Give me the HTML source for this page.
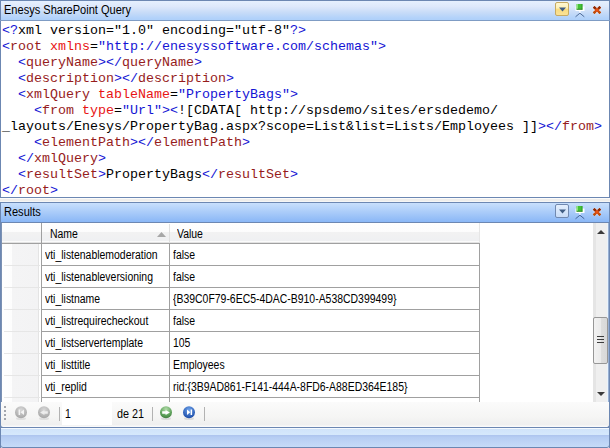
<!DOCTYPE html>
<html><head><meta charset="utf-8">
<style>
*{box-sizing:border-box}
html,body{margin:0;padding:0}
body{width:610px;height:448px;position:relative;overflow:hidden;background:#fff;font-family:"Liberation Sans",sans-serif}
.abs{position:absolute}
.ttl{position:absolute;font-size:12px;color:#000;white-space:nowrap;line-height:14px;transform-origin:0 0;transform:scaleX(0.92)}
.code{position:absolute;left:2px;top:23px;font-family:"Liberation Mono",monospace;font-size:13.333px;line-height:16px;white-space:pre;color:#000}
.b{color:#1414d4}
.e{color:#961c1c}
.a{color:#e81414}
.g{position:absolute;font-size:12px;line-height:14px;white-space:nowrap;color:#000;transform-origin:0 0;transform:scaleX(0.87)}
.hl{position:absolute;left:42px;width:438px;height:1px;background:#a0a0a0}
.il{position:absolute;left:4px;width:36px;height:1px;background:#e6e6e6}
</style></head><body>

<!-- ============ top panel ============ -->
<div class="abs" style="left:0;top:0;width:610px;height:198px;border:1px solid #6c87b2;background:#fff"></div>
<div class="abs" style="left:1px;top:1px;width:608px;height:19px;background:linear-gradient(#e6f0fe 0%,#dde8fb 30%,#c8dcf8 60%,#b2d2fa 90%,#aed0fa 100%)"></div>
<div class="abs" style="left:0;top:20px;width:610px;height:1px;background:#7f9cc4"></div>
<div class="ttl" style="left:4px;top:3px">Enesys SharePoint Query</div>

<!-- top icons -->
<div class="abs" style="left:555px;top:2px;width:14px;height:14px;border:1px solid #c6aa62;border-radius:2px;background:linear-gradient(#fef7d2 0%,#fdf0b8 42%,#f9dc80 52%,#fae298 100%)"></div>
<svg class="abs" style="left:559px;top:7px" width="7" height="5"><path d="M0 0.5 H7 L3.5 4.5 Z" fill="#405d84"/></svg>
<svg class="abs" style="left:573px;top:2px" width="13" height="16">
  <rect x="2.5" y="4.5" width="9" height="4.5" fill="#ffffff"/>
  <rect x="3.6" y="2" width="5.8" height="5.6" fill="#44c236"/>
  <rect x="3.6" y="2" width="1.4" height="5.6" fill="#8ee27e"/>
  <rect x="8.5" y="2" width="0.9" height="5.6" fill="#2f9a28"/>
  <rect x="3.6" y="6.8" width="5.8" height="0.8" fill="#2a7a24"/>
  <rect x="6.2" y="9" width="1.4" height="2" fill="#ffffff" opacity="0.85"/>
  <path d="M2.5 14.8 L6.9 11.2 L11.3 14.8" stroke="#4f6d9c" stroke-width="1" fill="none"/>
</svg>
<svg class="abs" style="left:591px;top:4px" width="12" height="12">
  <path d="M2.7 2.8 L9.3 9.2 M9.3 2.8 L2.7 9.2" stroke="#ffffff" stroke-width="3.8" opacity="0.45"/>
  <path d="M2.7 2.8 L9.3 9.2 M9.3 2.8 L2.7 9.2" stroke="#d8480f" stroke-width="2.3"/>
  <path d="M2.7 2.8 L4.7 4.7 M9.3 2.8 L7.3 4.7" stroke="#8a2a08" stroke-width="2.3"/>
  <path d="M2.7 9.2 L4.3 7.6 M9.3 9.2 L7.7 7.6" stroke="#b8500f" stroke-width="2.3"/>
  <rect x="5.2" y="5.2" width="1.6" height="1.6" fill="#ef5a14"/>
</svg>

<div class="code"><span class="b">&lt;?</span>xml version="1.0" encoding="utf-8"<span class="b">?&gt;</span>
<span class="b">&lt;</span><span class="e">root</span><span class="a"> xmlns</span>=<span class="b">"http://enesyssoftware.com/schemas"&gt;</span>
  <span class="b">&lt;</span><span class="e">queryName</span><span class="b">&gt;&lt;/</span><span class="e">queryName</span><span class="b">&gt;</span>
  <span class="b">&lt;</span><span class="e">description</span><span class="b">&gt;&lt;/</span><span class="e">description</span><span class="b">&gt;</span>
  <span class="b">&lt;</span><span class="e">xmlQuery</span><span class="a"> tableName</span>=<span class="b">"PropertyBags"&gt;</span>
    <span class="b">&lt;</span><span class="e">from</span><span class="a"> type</span>=<span class="b">"Url"&gt;&lt;</span>![CDATA[ http://spsdemo/sites/ersdedemo/
_layouts/Enesys/PropertyBag.aspx?scope=List&amp;list=Lists/Employees ]]<span class="b">&gt;&lt;/</span><span class="e">from</span><span class="b">&gt;</span>
    <span class="b">&lt;</span><span class="e">elementPath</span><span class="b">&gt;&lt;/</span><span class="e">elementPath</span><span class="b">&gt;</span>
  <span class="b">&lt;/</span><span class="e">xmlQuery</span><span class="b">&gt;</span>
  <span class="b">&lt;</span><span class="e">resultSet</span><span class="b">&gt;</span>PropertyBags<span class="b">&lt;/</span><span class="e">resultSet</span><span class="b">&gt;</span>
<span class="b">&lt;/</span><span class="e">root</span><span class="b">&gt;</span></div>

<!-- ============ gap ============ -->
<div class="abs" style="left:0;top:198px;width:610px;height:4px;background:linear-gradient(#fbfbfb 0,#fbfbfb 1px,#efeeec 1px,#efeeec 3px,#f6f6f5 3px)"></div>

<!-- ============ results panel ============ -->
<div class="abs" style="left:0;top:202px;width:610px;height:246px;background:#fff;border-left:1px solid #6c87b2;border-right:1px solid #6c87b2;border-top:1px solid #6c87b2"></div>
<div class="abs" style="left:1px;top:203px;width:608px;height:19px;background:linear-gradient(#c8dffc 0%,#a9cbf9 50%,#8ab7f6 100%)"></div>
<div class="abs" style="left:0;top:222px;width:610px;height:1px;background:#6c87b2"></div>
<div class="ttl" style="left:4px;top:205px">Results</div>

<!-- results icons -->
<div class="abs" style="left:555px;top:204px;width:14px;height:14px;border:1px solid #7189b0;border-radius:2px;background:linear-gradient(#e4effd,#c8dcf7)"></div>
<svg class="abs" style="left:559px;top:209px" width="7" height="5"><path d="M0 0.5 H7 L3.5 4.5 Z" fill="#405d84"/></svg>
<svg class="abs" style="left:573px;top:204px" width="13" height="16">
  <rect x="2.5" y="4.5" width="9" height="4.5" fill="#ffffff"/>
  <rect x="3.6" y="2" width="5.8" height="5.6" fill="#44c236"/>
  <rect x="3.6" y="2" width="1.4" height="5.6" fill="#8ee27e"/>
  <rect x="8.5" y="2" width="0.9" height="5.6" fill="#2f9a28"/>
  <rect x="3.6" y="6.8" width="5.8" height="0.8" fill="#2a7a24"/>
  <rect x="6.2" y="9" width="1.4" height="2" fill="#ffffff" opacity="0.85"/>
  <path d="M2.5 14.8 L6.9 11.2 L11.3 14.8" stroke="#45639a" stroke-width="1" fill="none"/>
</svg>
<svg class="abs" style="left:591px;top:206px" width="12" height="12">
  <path d="M2.7 2.8 L9.3 9.2 M9.3 2.8 L2.7 9.2" stroke="#ffffff" stroke-width="3.8" opacity="0.45"/>
  <path d="M2.7 2.8 L9.3 9.2 M9.3 2.8 L2.7 9.2" stroke="#d8480f" stroke-width="2.3"/>
  <path d="M2.7 2.8 L4.7 4.7 M9.3 2.8 L7.3 4.7" stroke="#8a2a08" stroke-width="2.3"/>
  <path d="M2.7 9.2 L4.3 7.6 M9.3 9.2 L7.7 7.6" stroke="#b8500f" stroke-width="2.3"/>
  <rect x="5.2" y="5.2" width="1.6" height="1.6" fill="#ef5a14"/>
</svg>

<!-- ============ grid ============ -->
<!-- indicator column background -->
<div class="abs" style="left:1px;top:223px;width:40px;height:179px;background:linear-gradient(90deg,#ffffff 0,#fdfdfd 11px,#f4f4f5 11px,#f3f3f4 37px,#e4e4e4 37px,#e4e4e4 38px,#ffffff 38px)"></div>
<!-- header -->
<div class="abs" style="left:42px;top:223px;width:437px;height:20px;background:linear-gradient(#fefefe 0,#fcfcfc 9px,#f2f2f2 9px,#eff0f2 18px,#fbfbfb 18px,#fbfbfb 19px,#e2e2e2 19px)"></div>
<div class="abs" style="left:1px;top:223px;width:40px;height:20px;background:linear-gradient(#fefefe 0,#fcfcfc 9px,#f2f2f2 9px,#eff0f2 18px,#fbfbfb 18px,#fbfbfb 19px,#e2e2e2 19px)"></div>
<div class="abs" style="left:1px;top:243px;width:479px;height:1px;background:#a0a0a0"></div>
<div class="abs" style="left:41px;top:223px;width:1px;height:179px;background:#a0a0a0"></div>
<div class="abs" style="left:169px;top:243px;width:1px;height:159px;background:#a0a0a0"></div>
<div class="abs" style="left:169px;top:224px;width:1px;height:18px;background:#e0e0e0"></div>
<div class="abs" style="left:479px;top:243px;width:1px;height:159px;background:#a0a0a0"></div>
<div class="abs" style="left:479px;top:223px;width:1px;height:20px;background:#e6e6e6"></div>

<div class="g" style="left:50px;top:227px">Name</div>
<svg class="abs" style="left:157px;top:232px" width="9" height="5"><path d="M0 5 L4.5 0 L9 5 Z" fill="#a7a7a7"/></svg>
<div class="g" style="left:177px;top:227px">Value</div>

<div class="hl" style="top:265px"></div><div class="il" style="top:265px"></div>
<div class="hl" style="top:287px"></div><div class="il" style="top:287px"></div>
<div class="hl" style="top:309px"></div><div class="il" style="top:309px"></div>
<div class="hl" style="top:331px"></div><div class="il" style="top:331px"></div>
<div class="hl" style="top:353px"></div><div class="il" style="top:353px"></div>
<div class="hl" style="top:375px"></div><div class="il" style="top:375px"></div>
<div class="hl" style="top:397px"></div><div class="il" style="top:397px"></div>

<div class="g" style="left:45px;top:248px">vti_listenablemoderation</div><div class="g" style="left:172.5px;top:248px">false</div>
<div class="g" style="left:45px;top:270px">vti_listenableversioning</div><div class="g" style="left:172.5px;top:270px">false</div>
<div class="g" style="left:45px;top:292px">vti_listname</div><div class="g" style="left:172.5px;top:292px">{B39C0F79-6EC5-4DAC-B910-A538CD399499}</div>
<div class="g" style="left:45px;top:314px">vti_listrequirecheckout</div><div class="g" style="left:172.5px;top:314px">false</div>
<div class="g" style="left:45px;top:336px">vti_listservertemplate</div><div class="g" style="left:172.5px;top:336px">105</div>
<div class="g" style="left:45px;top:358px">vti_listtitle</div><div class="g" style="left:172.5px;top:358px">Employees</div>
<div class="g" style="left:45px;top:380px">vti_replid</div><div class="g" style="left:172.5px;top:380px">rid:{3B9AD861-F141-444A-8FD6-A88ED364E185}</div>

<!-- ============ scrollbar ============ -->
<div class="abs" style="left:593px;top:223px;width:15px;height:179px;background:linear-gradient(90deg,#e5e5e5 0,#e5e5e5 3px,#efefef 3px,#efefef 14px,#e9f3fc 14px)"></div>
<svg class="abs" style="left:597px;top:229px" width="8" height="6"><path d="M0 5 L4 1 L8 5 Z" fill="#3a3a3a"/></svg>
<svg class="abs" style="left:597px;top:391px" width="8" height="6"><path d="M0 1 L4 5 L8 1 Z" fill="#3a3a3a"/></svg>
<div class="abs" style="left:593px;top:317px;width:15px;height:47px;border:1px solid #979797;border-radius:2px;background:linear-gradient(90deg,#f2f2f2 0,#ebebeb 50%,#dedede 51%,#d8d8d8 100%)"></div>
<div class="abs" style="left:597px;top:336px;width:7px;height:1px;background:#3c3c3c"></div>
<div class="abs" style="left:597px;top:339px;width:7px;height:1px;background:#3c3c3c"></div>
<div class="abs" style="left:597px;top:342px;width:7px;height:1px;background:#3c3c3c"></div>

<!-- ============ navigator ============ -->
<div class="abs" style="left:0;top:402px;width:610px;height:26px;border:1px solid #6c87b2;border-top:none;border-radius:0 0 3px 3px;background:linear-gradient(#fbfbfb,#f5f5f4 60%,#efefef 92%,#fafafa 96%)"></div>
<div class="abs" style="left:62px;top:402px;width:50px;height:23px;background:#ffffff"></div>
<div class="abs" style="left:4px;top:406px;width:2px;height:2px;background:#a3a6ad"></div>
<div class="abs" style="left:4px;top:410px;width:2px;height:2px;background:#a3a6ad"></div>
<div class="abs" style="left:4px;top:414px;width:2px;height:2px;background:#a3a6ad"></div>
<div class="abs" style="left:4px;top:418px;width:2px;height:2px;background:#a3a6ad"></div>

<svg class="abs" style="left:13px;top:404px" width="200" height="18">
  <defs>
    <radialGradient id="gg" cx="50%" cy="30%" r="70%"><stop offset="0" stop-color="#d8d8d8"/><stop offset="1" stop-color="#a6a6a6"/></radialGradient>
    <radialGradient id="gr" cx="50%" cy="25%" r="75%"><stop offset="0" stop-color="#b2dcaa"/><stop offset="0.6" stop-color="#66a862"/><stop offset="1" stop-color="#3e7e3c"/></radialGradient>
    <radialGradient id="bl" cx="50%" cy="30%" r="70%"><stop offset="0" stop-color="#6fa4ec"/><stop offset="1" stop-color="#1a4aa6"/></radialGradient>
  </defs>
  <ellipse cx="8" cy="14.5" rx="5" ry="1.5" fill="#000" opacity="0.08"/>
  <circle cx="8" cy="8.3" r="6" fill="url(#gg)"/>
  <rect x="5.6" y="5.5" width="1.5" height="5.5" fill="#f4f4f4"/>
  <path d="M11 5.5 V11 L7.5 8.25 Z" fill="#f4f4f4"/>
  <ellipse cx="31" cy="14.5" rx="5" ry="1.5" fill="#000" opacity="0.08"/>
  <circle cx="31" cy="8.3" r="6" fill="url(#gg)"/>
  <path d="M27.1 8.5 L31.4 5.9 V7.2 H34.8 V9.8 H31.4 V11.1 Z" fill="#ededed"/>
  <ellipse cx="153" cy="14.5" rx="5" ry="1.5" fill="#000" opacity="0.1"/>
  <circle cx="153" cy="8.3" r="6" fill="url(#gr)"/>
  <path d="M156.9 8.5 L152.6 5.9 V7.2 H149.2 V9.8 H152.6 V11.1 Z" fill="#ffffff"/>
  <ellipse cx="176" cy="14.5" rx="5" ry="1.5" fill="#000" opacity="0.1"/>
  <circle cx="176" cy="8.3" r="6" fill="url(#bl)"/>
  <path d="M174 5.5 V11 L177.3 8.25 Z" fill="#ffffff"/>
  <rect x="177.6" y="5.5" width="1.5" height="5.5" fill="#ffffff"/>
</svg>

<div class="abs" style="left:59px;top:407px;width:1px;height:14px;background:#b2b2b2"></div>
<div class="abs" style="left:152px;top:407px;width:1px;height:14px;background:#b2b2b2"></div>
<div class="abs" style="left:204px;top:407px;width:1px;height:14px;background:#b2b2b2"></div>
<div class="g" style="left:65px;top:407px;transform:scaleX(0.88)">1</div>
<div class="g" style="left:117px;top:407px;transform:scaleX(0.9)">de 21</div>

<!-- inner 2px borders -->
<div class="abs" style="left:1px;top:223px;width:1px;height:179px;background:#7b91b3"></div>
<div class="abs" style="left:608px;top:223px;width:1px;height:179px;background:#98afd2"></div>
<!-- ============ status bar ============ -->
<div class="abs" style="left:0;top:427px;width:610px;height:21px;border:1px solid #6c87b2;border-radius:0 0 3px 3px;background:linear-gradient(#f4f9ff 0,#f4f9ff 1px,#d0e3fa 1px,#d5e8fc 7px,#acc3ee 7px,#b6cdf3 50%,#c6dbf8 100%)"></div>

</body></html>
